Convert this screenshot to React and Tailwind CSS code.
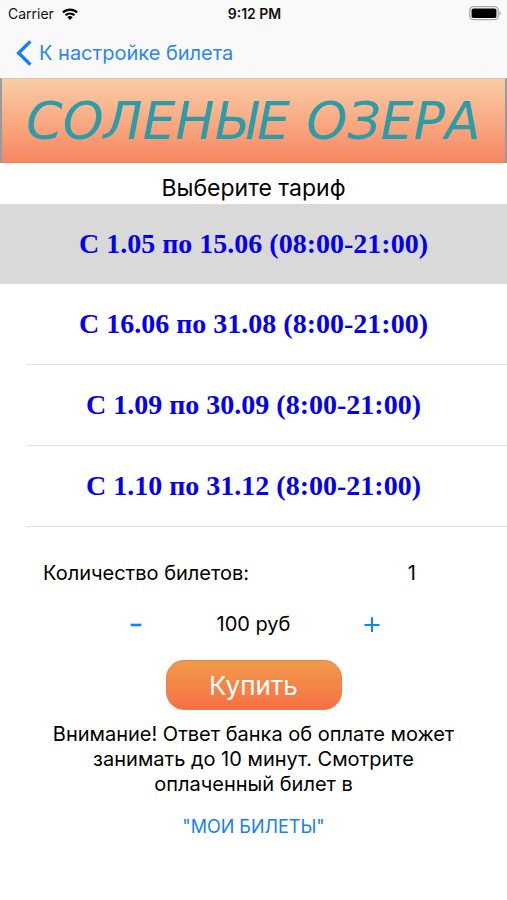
import React, { useState } from "react";

const TARIFFS = [
  { id: "spring", title: "С 1.05 по 15.06 (08:00-21:00)" },
  { id: "summer", title: "С 16.06 по 31.08 (8:00-21:00)" },
  { id: "september", title: "С 1.09 по 30.09 (8:00-21:00)" },
  { id: "winter", title: "С 1.10 по 31.12 (8:00-21:00)" },
];

const PRICE = 100;

function WifiIcon() {
  return (
    <svg className="h-3 w-4" viewBox="0 0 16 12" fill="none" stroke="#000" strokeWidth="2.1" aria-hidden="true">
      <path d="M0.9 4.6a10 10 0 0 1 14.2 0" />
      <path d="M3.5 7.3a6.4 6.4 0 0 1 9 0" />
      <path d="M8 12 5.3 9.3a3.8 3.8 0 0 1 5.4 0z" fill="#000" stroke="none" />
    </svg>
  );
}

function BatteryIcon() {
  return (
    <svg className="h-4 w-8" viewBox="0 0 32 16" aria-hidden="true">
      <rect x="0.8" y="0.7" width="28.4" height="13" rx="3.6" fill="none" stroke="#a8a8a8" strokeWidth="1.3" />
      <rect x="2.6" y="2.4" width="24.8" height="9.6" rx="1.8" fill="#000" />
      <path d="M30.5 5.2c1.6.6 1.6 3.4 0 4z" fill="#a0a0a0" />
    </svg>
  );
}

function StatusBar() {
  return (
    <div className="grid h-7 grid-cols-3 items-center pl-2 pr-1.5 text-sm text-[#111]">
      <div className="flex items-center gap-2">
        <span>Carrier</span>
        <WifiIcon />
      </div>
      <span className="text-center font-semibold">9:12 PM</span>
      <div className="flex justify-end">
        <BatteryIcon />
      </div>
    </div>
  );
}

function TariffRow({ tariff, selected, first, onSelect }) {
  return (
    <li className={selected ? "bg-[#d9d9d9]" : "bg-white"}>
      <button
        type="button"
        aria-pressed={selected}
        onClick={() => onSelect(tariff.id)}
        className="block w-full text-center"
      >
        <span className="block font-['Liberation_Serif',serif] text-[28px] leading-[80px] font-bold text-[#0400f0]">
          {tariff.title}
        </span>
        {!first && <span className="ml-[26px] block h-px bg-[#e2e2e4]" />}
      </button>
    </li>
  );
}

export default function App() {
  const [selectedId, setSelectedId] = useState("spring");
  const [count, setCount] = useState(1);

  return (
    <div className="min-h-screen bg-white font-[Inter,sans-serif] text-black">
      <header className="bg-[#f9f9f9]">
        <StatusBar />
        <nav className="flex h-[50px] items-center px-4">
          <a href="#ticket" className="flex items-center gap-[7px] text-xl text-[#2a86f5]">
            <svg className="h-[26px] w-4" viewBox="0 0 16 26" fill="none" stroke="#147efb" strokeWidth="3.4" aria-hidden="true">
              <path d="M14.4 1.4 2.6 13l11.8 11.6" />
            </svg>
            К настройке билета
          </a>
        </nav>
      </header>

      <div className="flex h-[85px] items-center justify-center border-x-2 border-t border-x-[#999a9c] border-t-[#dcc4b0] bg-linear-to-b from-[#f8cda6] to-[#f6855f]">
        <h1 className="font-['DejaVu_Sans',sans-serif] text-[52px] leading-none whitespace-nowrap text-[#2c9ca8] italic">
          СОЛЕНЫЕ ОЗЕРА
        </h1>
      </div>

      <main>
        <h2 className="pt-[9px] text-center text-[23px] leading-8">Выберите тариф</h2>

        <ul>
          {TARIFFS.map((tariff, i) => (
            <TariffRow
              key={tariff.id}
              tariff={tariff}
              first={i === 0}
              selected={tariff.id === selectedId}
              onSelect={setSelectedId}
            />
          ))}
        </ul>

        <div className="mt-[30px] flex items-center justify-between pr-[91px] pl-[43px] text-xl leading-8">
          <span>Количество билетов:</span>
          <output>{count}</output>
        </div>

        <div className="mt-[17px] flex items-center justify-center text-xl leading-9">
          <button
            type="button"
            aria-label="Меньше билетов"
            onClick={() => setCount(Math.max(1, count - 1))}
            className="flex h-9 w-10 items-center justify-center"
          >
            <svg className="h-4 w-4" viewBox="0 0 16 16" stroke="#147efb" strokeWidth="2.6" aria-hidden="true">
              <path d="M2.6 9h10.8" />
            </svg>
          </button>
          <span className="w-49 text-center">{PRICE * count} руб</span>
          <button
            type="button"
            aria-label="Больше билетов"
            onClick={() => setCount(count + 1)}
            className="flex h-9 w-10 items-center justify-center"
          >
            <svg className="h-4 w-4" viewBox="0 0 16 16" stroke="#147efb" strokeWidth="2.1" aria-hidden="true">
              <path d="M.5 9h15M8 1.2v14.8" />
            </svg>
          </button>
        </div>

        <div className="mt-[18px] flex justify-center">
          <button
            type="button"
            className="h-[50px] w-44 rounded-[18px] border border-[#e8804c] bg-linear-to-b from-[#f09a48] to-[#f66f45] text-[26px] text-white"
          >
            Купить
          </button>
        </div>

        <p className="mx-auto mt-3 max-w-[430px] text-center text-xl leading-[25px]">
          Внимание! Ответ банка об оплате может занимать до 10 минут. Смотрите оплаченный билет в
        </p>

        <div className="mt-[14px] pb-4 text-center">
          <a href="#my-tickets" className="inline-block text-lg leading-8 text-[#147efb]">
            "МОИ БИЛЕТЫ"
          </a>
        </div>
      </main>
    </div>
  );
}
